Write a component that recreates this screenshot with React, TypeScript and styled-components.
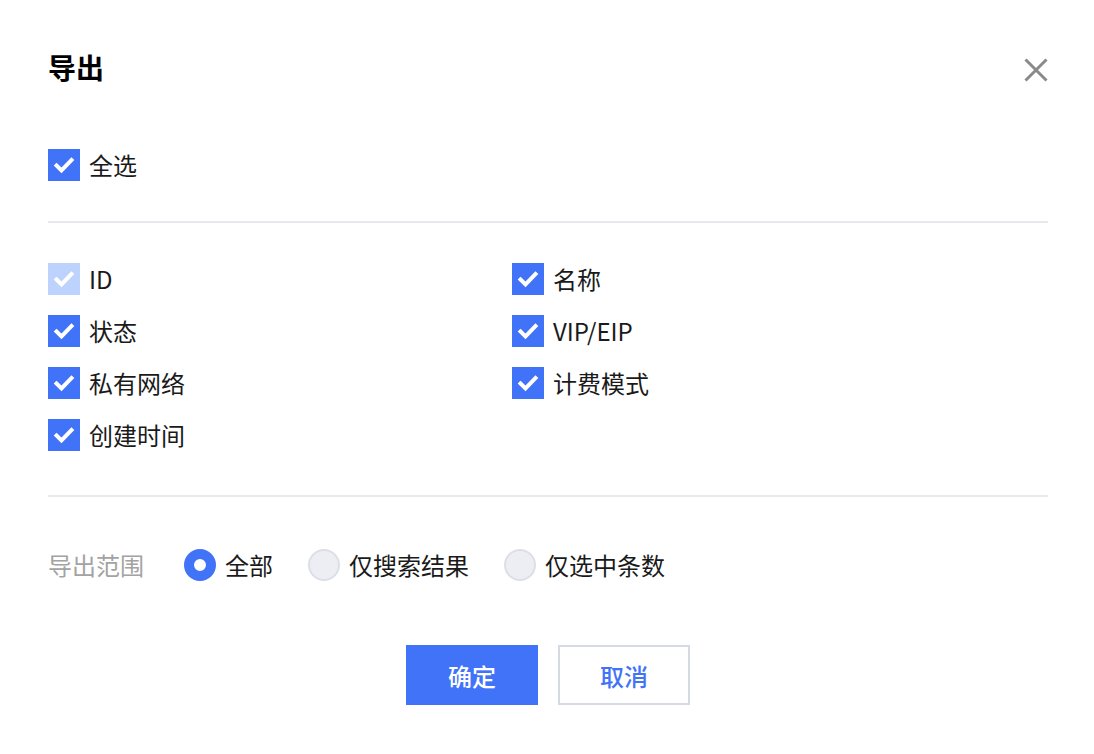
import React from "react";
import styled, { createGlobalStyle } from "styled-components";

const Global = createGlobalStyle`
  html, body { margin: 0; padding: 0; background: #fff; }
  body { font-family: "Noto Sans CJK SC", "Noto Sans", sans-serif; color: #1a1a1a; }
`;

const BLUE = "#4173f8";

const Dialog = styled.div`
  width: 1094px;
  height: 754px;
  box-sizing: border-box;
  padding: 47px 46px 0 48px;
  background: #fff;
  display: flex;
  flex-direction: column;
`;

const Header = styled.div`
  display: flex;
  align-items: center;
  justify-content: space-between;
  height: 40px;
`;

const Title = styled.h1`
  margin: 0;
  font-size: 28px;
  font-weight: 700;
  line-height: 40px;
  color: #000;
`;

const CloseBtn = styled.button`
  border: none;
  background: none;
  padding: 0;
  width: 24px;
  height: 24px;
  margin-right: 0;
  margin-top: 6px;
  cursor: pointer;
  display: flex;
`;

const Divider = styled.div`
  height: 2px;
  background: #e8e9ee;
`;

const Section = styled.div<{ $top: number; $bottom: number }>`
  padding-top: ${(p) => p.$top}px;
  padding-bottom: ${(p) => p.$bottom}px;
`;

const Grid = styled.div`
  display: grid;
  grid-template-columns: 464px 1fr;
  row-gap: 20px;
`;

const CheckRow = styled.label`
  display: flex;
  align-items: center;
  gap: 9px;
  height: 32px;
  font-size: 24px;
  line-height: 32px;
  color: #1a1a1a;
`;

const Box = styled.span<{ $disabled?: boolean }>`
  width: 32px;
  height: 32px;
  flex: none;
  background: ${(p) => (p.$disabled ? "#bdd2fd" : BLUE)};
  display: flex;
  align-items: center;
  justify-content: center;
`;

const RangeRow = styled.div`
  display: flex;
  align-items: center;
  height: 32px;
  font-size: 24px;
`;

const RangeLabel = styled.span`
  color: #a3a3a3;
  margin-right: 40px;
  line-height: 32px;
`;

const RadioItem = styled.label`
  display: flex;
  align-items: center;
  gap: 9px;
  margin-right: 35px;
  line-height: 32px;
  color: #1a1a1a;
`;

const RadioDot = styled.span<{ $checked?: boolean }>`
  width: 32px;
  height: 32px;
  box-sizing: border-box;
  border-radius: 50%;
  flex: none;
  background: ${(p) => (p.$checked ? "#fff" : "#eceef3")};
  border: ${(p) => (p.$checked ? `10px solid ${BLUE}` : "2px solid #dcdfe7")};
`;

const Footer = styled.div`
  display: flex;
  justify-content: center;
  gap: 20px;
  padding-top: 64px;
`;

const Button = styled.button<{ $primary?: boolean }>`
  width: 132px;
  height: 60px;
  box-sizing: border-box;
  font-family: inherit;
  font-size: 24px;
  font-weight: 500;
  cursor: pointer;
  background: ${(p) => (p.$primary ? BLUE : "#fff")};
  color: ${(p) => (p.$primary ? "#fff" : BLUE)};
  border: ${(p) => (p.$primary ? "none" : "2px solid #d6dae2")};
`;

const Check = () => (
  <svg width="32" height="32" viewBox="0 0 32 32">
    <path d="M8.5 16.5 L13.5 21.5 L23.5 11" fill="none" stroke="#fff" strokeWidth="4" strokeLinecap="square" />
  </svg>
);

const Checkbox = ({ label, disabled }: { label: string; disabled?: boolean }) => (
  <CheckRow>
    <Box $disabled={disabled}>
      <Check />
    </Box>
    {label}
  </CheckRow>
);

const fields: [string, boolean?][] = [
  ["ID", true],
  ["名称"],
  ["状态"],
  ["VIP/EIP"],
  ["私有网络"],
  ["计费模式"],
  ["创建时间"],
];

export default function App() {
  return (
    <>
      <Global />
      <Dialog>
        <Header>
          <Title>导出</Title>
          <CloseBtn aria-label="close">
            <svg width="24" height="24" viewBox="0 0 24 24">
              <path d="M1.5 1.5 L22.5 22.5 M22.5 1.5 L1.5 22.5" stroke="#8a8a8a" strokeWidth="3" />
            </svg>
          </CloseBtn>
        </Header>
        <Section $top={62} $bottom={40}>
          <Checkbox label="全选" />
        </Section>
        <Divider />
        <Section $top={40} $bottom={44}>
          <Grid>
            {fields.map(([l, d]) => (
              <Checkbox key={l} label={l} disabled={d} />
            ))}
          </Grid>
        </Section>
        <Divider />
        <Section $top={52} $bottom={0}>
          <RangeRow>
            <RangeLabel>导出范围</RangeLabel>
            <RadioItem>
              <RadioDot $checked />
              全部
            </RadioItem>
            <RadioItem>
              <RadioDot />
              仅搜索结果
            </RadioItem>
            <RadioItem>
              <RadioDot />
              仅选中条数
            </RadioItem>
          </RangeRow>
        </Section>
        <Footer>
          <Button $primary>确定</Button>
          <Button>取消</Button>
        </Footer>
      </Dialog>
    </>
  );
}
